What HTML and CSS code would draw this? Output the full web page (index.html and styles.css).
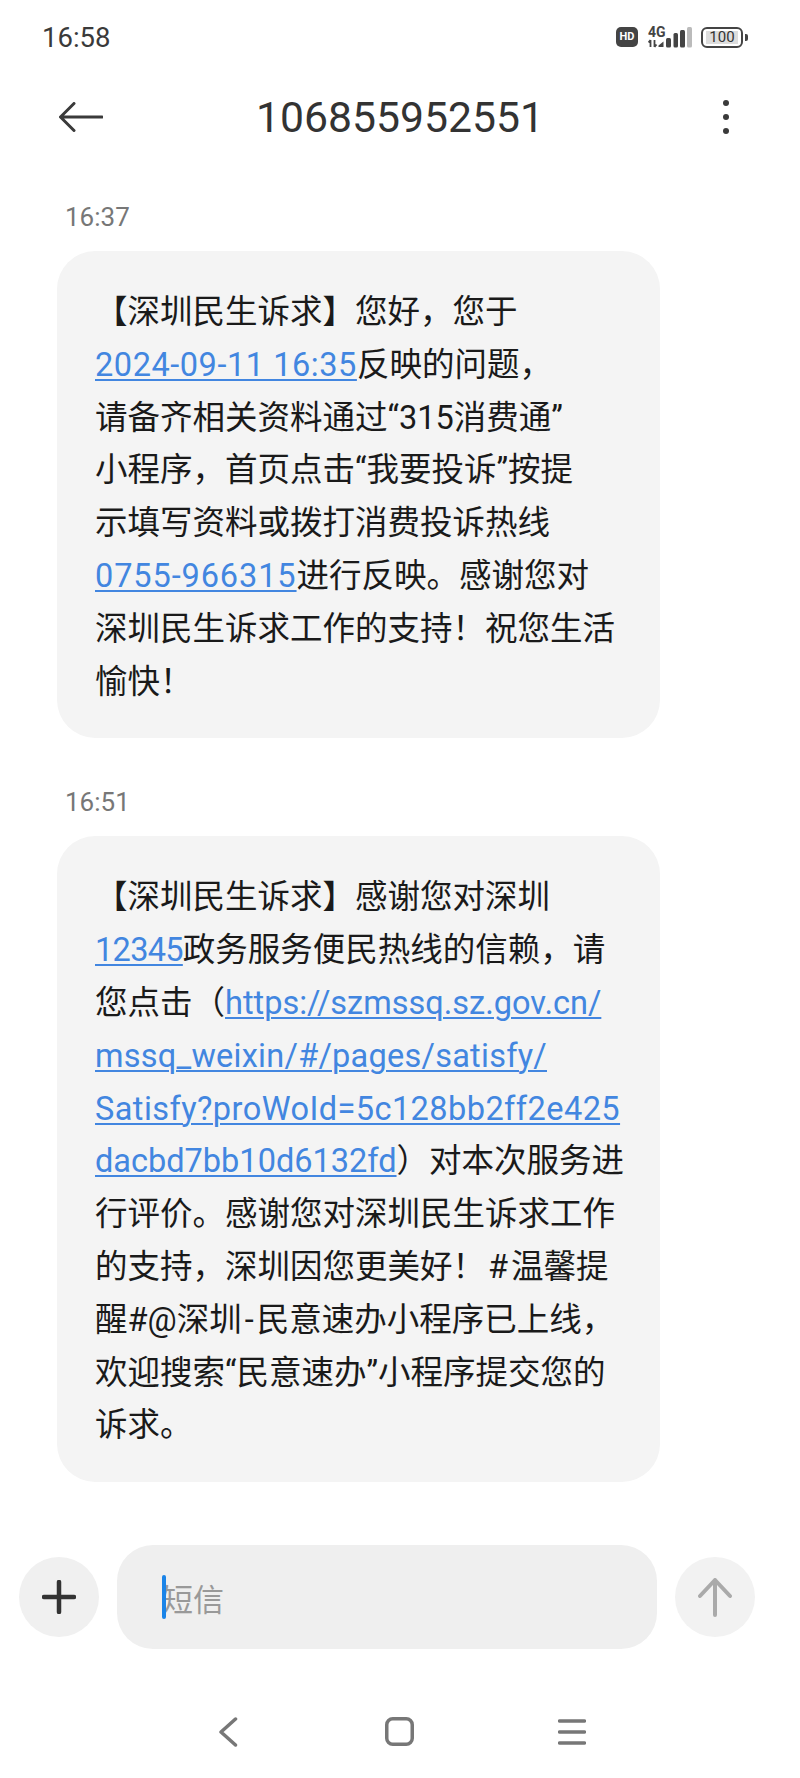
FILE: index.html
```html
<!DOCTYPE html>
<html lang="zh-CN">
<head>
    <meta charset="utf-8">
    <title>106855952551</title>
    <link rel="stylesheet" href="styles.css">
</head>
<body>
    <div class="status-bar">
        <span class="clock">16:58</span>
        <div class="status-icons">
            <span class="hd">HD</span>
            <div class="signal">
                <span class="net">4G</span>
                <svg class="bars" width="44" height="21" viewBox="0 0 44 21">
                    <path d="M2.500 13v7M0.500 15.500l2-2.500M6.500 13v7M6.500 20l2-2.500" fill="none" stroke="#444" stroke-width="1.800"/>
                    <path d="M10.500 20v-1.500l5-4V20z" fill="#444"/>
                    <rect x="18" y="11" width="5" height="9.500" rx="1.500" fill="#444"/>
                    <rect x="25.500" y="6" width="4.500" height="14.500" rx="1.500" fill="#444"/>
                    <rect x="32" y="3" width="5" height="17.500" rx="1.500" fill="#444"/>
                    <rect x="39" y="0" width="5" height="20.500" rx="1.500" fill="#bbb"/>
                </svg>
            </div>
            <div class="battery"><span class="level">100</span></div>
            <span class="nub"></span>
        </div>
    </div>

    <div class="title-bar">
        <svg class="back" width="44" height="30" viewBox="0 0 44 30">
            <path d="M43 15H2M15 1.500L1.500 15 15 28.500" fill="none" stroke="#3a3a3a" stroke-width="3" stroke-linecap="round" stroke-linejoin="round"/>
        </svg>
        <h1>106855952551</h1>
        <svg class="more" width="8" height="36" viewBox="0 0 8 36">
            <circle cx="4" cy="4" r="3" fill="#3a3a3a"/>
            <circle cx="4" cy="18" r="3" fill="#3a3a3a"/>
            <circle cx="4" cy="32" r="3" fill="#3a3a3a"/>
        </svg>
    </div>

    <div class="thread">
        <div class="time">16:37</div>
        <div class="bubble">
            【深圳民生诉求】您好，您于<br>
            <a class="date" href="#">2024-09-11 16:35</a>反映的问题，<br>
            请备齐相关资料通过“315消费通”<br>
            小程序，首页点击“我要投诉”按提<br>
            示填写资料或拨打消费投诉热线<br>
            <a class="phone" href="#">0755-966315</a>进行反映。感谢您对<br>
            深圳民生诉求工作的支持！祝您生活<br>
            愉快！
        </div>

        <div class="time second">16:51</div>
        <div class="bubble">
            【深圳民生诉求】感谢您对深圳<br>
            <a class="short" href="#">12345</a>政务服务便民热线的信赖，请<br>
            您点击（<a href="#">https://szmssq.sz.gov.cn/</a><br>
            <a class="path" href="#">mssq_weixin/#/pages/satisfy/</a><br>
            <a class="query" href="#">Satisfy?proWoId=5c128bb2ff2e425</a><br>
            <a href="#">dacbd7bb10d6132fd</a>）对本次服务进<br>
            行评价。感谢您对深圳民生诉求工作<br>
            的支持，深圳因您更美好！<span class="wide">#</span>温馨提<br>
            醒#@深圳<span class="wide">-</span>民意速办小程序已上线，<br>
            欢迎搜索“民意速办”小程序提交您的<br>
            诉求。
        </div>
    </div>

    <div class="composer">
        <div class="round-btn">
            <svg width="34" height="34" viewBox="0 0 34 34">
                <path d="M17 2v30M2 17h30" fill="none" stroke="#333" stroke-width="4.500" stroke-linecap="round"/>
            </svg>
        </div>
        <div class="input">
            <span class="caret"></span>
            <span class="placeholder">短信</span>
        </div>
        <div class="round-btn send">
            <svg width="34" height="40" viewBox="0 0 34 40">
                <path d="M17 38V3M2 19L17 3l15 16" fill="none" stroke="#aaa" stroke-width="4" stroke-linecap="round" stroke-linejoin="round"/>
            </svg>
        </div>
    </div>

    <div class="nav-bar">
        <svg class="nav-back" width="20" height="30" viewBox="0 0 20 30">
            <path d="M17.500 2L3 15l14.500 13" fill="none" stroke="#777" stroke-width="3.500" stroke-linecap="round" stroke-linejoin="round"/>
        </svg>
        <svg class="nav-home" width="29" height="30" viewBox="0 0 29 30">
            <rect x="1.750" y="1.750" width="25.500" height="25.500" rx="6" fill="none" stroke="#777" stroke-width="3.500"/>
        </svg>
        <svg width="28" height="28" viewBox="0 0 28 28">
            <path d="M1.500 3h25M1.500 14h25M1.500 25h25" fill="none" stroke="#777" stroke-width="3.500" stroke-linecap="round"/>
        </svg>
    </div>
</body>
</html>
```

FILE: styles.css
```css
* {
    box-sizing: border-box;
}
html, body {
    height: 100%;
}
body {
    margin: 0;
    background-color: #fff;
    color: #1a1a1a;
    font-family: Roboto, "Noto Sans CJK SC", sans-serif;
    display: flex;
    flex-direction: column;
    height: 1778px;
    overflow: hidden;
}

.status-bar {
    display: flex;
    justify-content: space-between;
    align-items: center;
    height: 74px;
    padding: 0 52px 0 42px;
}
.clock {
    font-size: 27.500px;
    color: #3a3a3a;
}
.status-icons {
    display: flex;
    align-items: center;
}
.hd {
    width: 22px;
    height: 20px;
    margin-right: 10px;
    background-color: #444;
    border-radius: 5px;
    color: #fff;
    font-size: 11px;
    font-weight: 700;
    line-height: 20px;
    text-align: center;
}
.signal {
    position: relative;
    width: 44px;
    height: 21px;
    margin-right: 9px;
}
.net {
    position: absolute;
    left: 0;
    top: -1px;
    font-size: 14px;
    font-weight: 700;
    color: #444;
    line-height: 12px;
}
.bars {
    display: block;
}
.battery {
    width: 42px;
    height: 21px;
    padding: 2px 3px;
    border: 2px solid #444;
    border-radius: 6px;
}
.level {
    display: block;
    height: 13px;
    background-color: #ddd;
    color: #333;
    font-size: 15px;
    line-height: 13px;
    text-align: center;
}
.nub {
    width: 3px;
    height: 7px;
    margin-left: 2px;
    background-color: #444;
    border-radius: 0 2px 2px 0;
}

.title-bar {
    display: flex;
    align-items: center;
    height: 86px;
    padding: 0 70px 0 59px;
}
.title-bar h1 {
    flex: 1;
    margin: 0;
    font-size: 42.700px;
    font-weight: 400;
    color: #333;
    text-align: center;
}
.more {
    margin-left: 25px;
}

.thread {
    padding: 37px 140px 0 57px;
}
.time {
    height: 40px;
    padding-left: 8px;
    font-size: 26px;
    line-height: 40px;
    color: #777;
}
.time.second {
    margin-top: 44px;
}
.bubble {
    width: 603px;
    margin-top: 14px;
    padding: 35px 0 30px 38px;
    background-color: #f4f4f4;
    border-radius: 38px;
    font-size: 32.500px;
    line-height: 52.800px;
    white-space: nowrap;
}
.bubble a {
    color: #4286e0;
    text-decoration: underline;
    text-underline-offset: 3px;
    text-decoration-thickness: 1.500px;
}
.bubble .date {
    letter-spacing: 0.550px;
}
.bubble .phone {
    letter-spacing: 0.900px;
}
.bubble .short {
    letter-spacing: -0.700px;
}
.bubble .path {
    letter-spacing: 0.250px;
}
.bubble .query {
    letter-spacing: 0.440px;
}
.wide {
    padding: 0 3px;
}

.composer {
    display: flex;
    align-items: center;
    margin-top: 63px;
    padding: 0 45px 0 19px;
    justify-content: space-between;
}
.round-btn {
    display: flex;
    align-items: center;
    justify-content: center;
    width: 80px;
    height: 80px;
    background-color: #f0f0f0;
    border-radius: 50%;
}
.round-btn.send {
    background-color: #f2f2f2;
}
.input {
    position: relative;
    display: flex;
    align-items: center;
    width: 540px;
    height: 104px;
    padding-left: 45px;
    background-color: #efefef;
    border-radius: 36px;
}
.caret {
    position: absolute;
    left: 45px;
    top: 30px;
    width: 4px;
    height: 44px;
    background-color: #1a84e8;
    border-radius: 2px;
}
.placeholder {
    font-size: 31px;
    color: #999;
}

.nav-bar {
    display: flex;
    justify-content: center;
    align-items: center;
    margin-top: auto;
    padding: 0 0 31px 4px;
}
.nav-back {
    margin-right: 147px;
}
.nav-home {
    margin-right: 144px;
}
```
